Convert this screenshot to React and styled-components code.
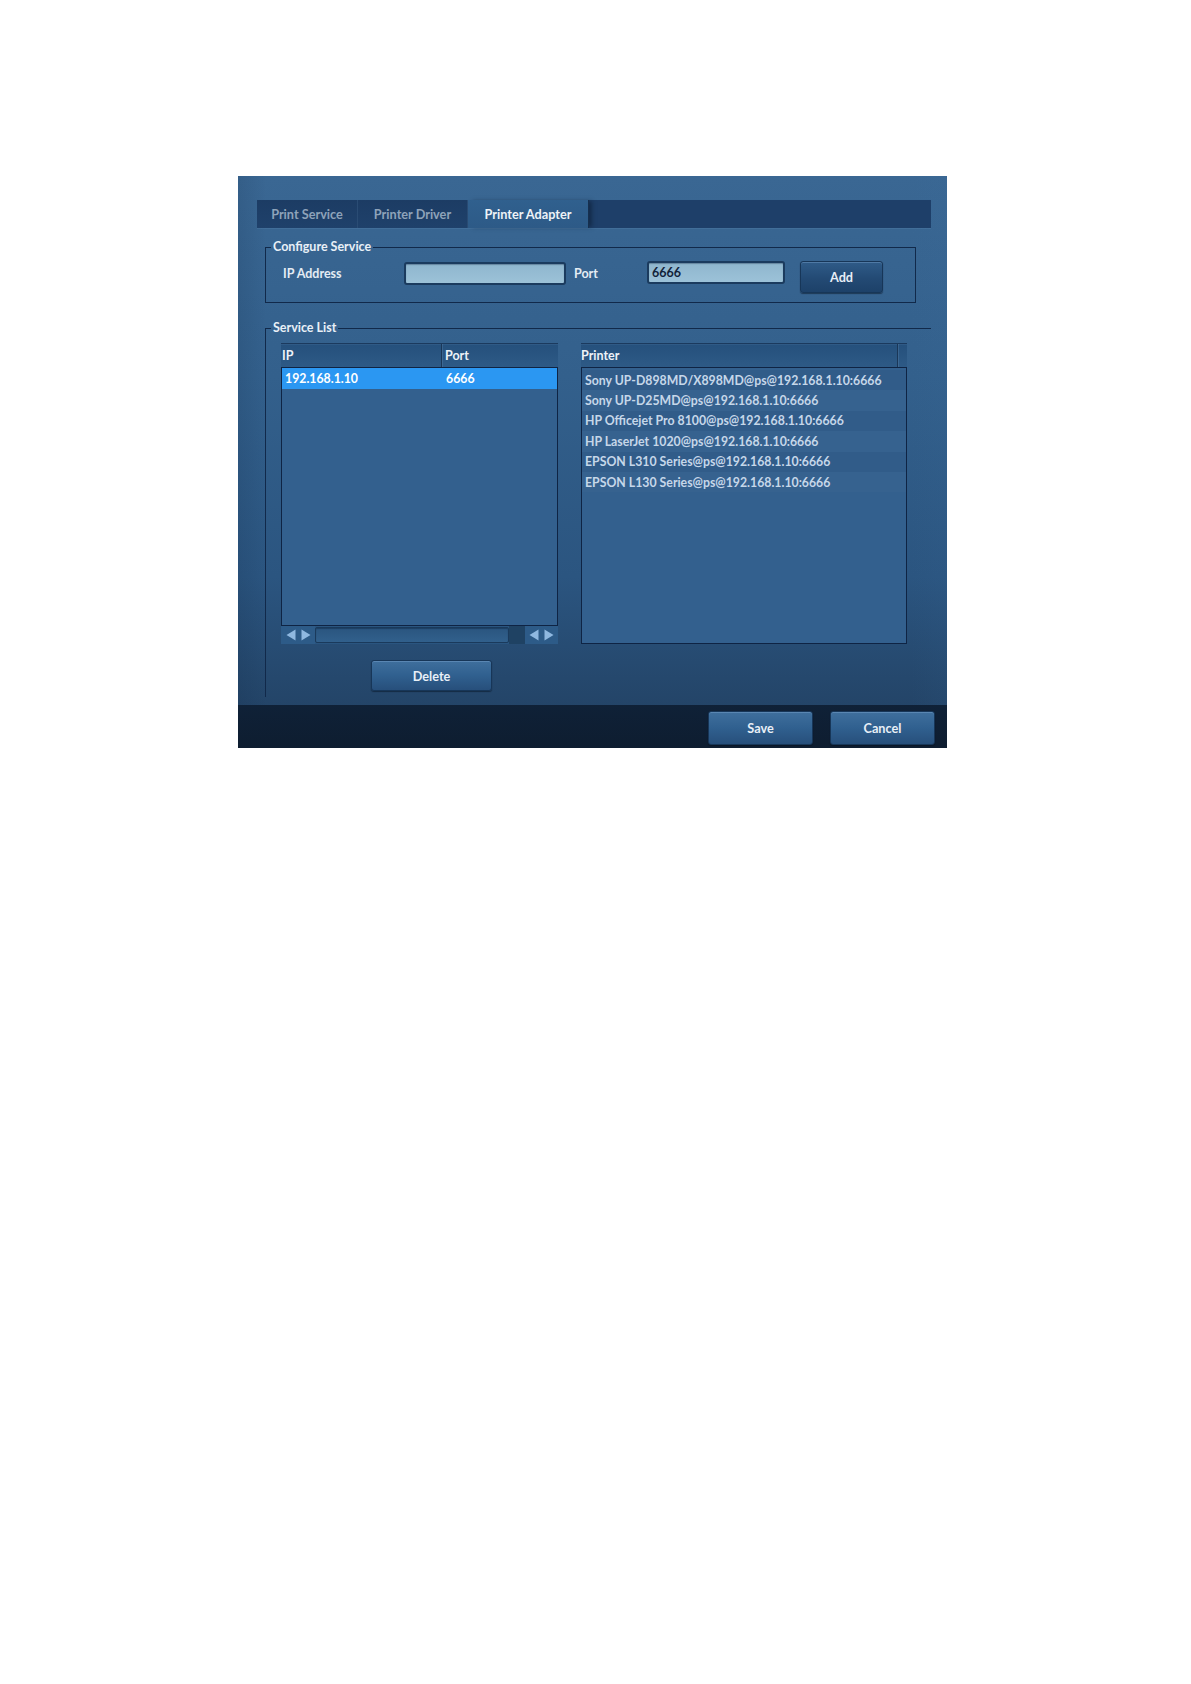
import React from "react";
import styled, { createGlobalStyle } from "styled-components";

const Global = createGlobalStyle`
  html, body { margin: 0; padding: 0; background: #ffffff; }
  body { font-family: "Lato", "Open Sans", sans-serif; }
  * { box-sizing: border-box; }
`;

const Page = styled.div`
  padding: 176px 0 0 238px;
  min-height: 1684px;
`;

const Dialog = styled.div`
  width: 709px;
  height: 572px;
  display: flex;
  flex-direction: column;
  background:
    linear-gradient(90deg, rgba(10, 30, 55, 0.12) 0%, rgba(0, 0, 0, 0) 4%, rgba(0, 0, 0, 0) 95%, rgba(60, 110, 160, 0.08) 100%),
    linear-gradient(180deg, #3a6793 0%, #33608c 35%, #2b5580 70%, #213f60 100%);
  font-weight: 700;
  font-size: 12.5px;
  color: #e6eef6;
`;

const Body = styled.div`
  flex: 1;
  display: flex;
  flex-direction: column;
  padding: 24px 16px 8px 19px;
`;

const TabBar = styled.div`
  height: 28px;
  display: flex;
  background: #1e3f69;
  box-shadow: 0 1px 0 rgba(120, 160, 200, 0.15);
`;

const Tab = styled.div`
  width: ${(p) => p.$w}px;
  display: flex;
  align-items: center;
  justify-content: center;
  font-size: 12.7px;
  color: ${(p) => (p.$active ? "#eef3f8" : "#8ea3ba")};
  background: ${(p) =>
    p.$active
      ? "linear-gradient(180deg, #30608e 0%, #2d5a87 100%)"
      : "linear-gradient(180deg, #1c3c64 0%, #1f416b 100%)"};
  border-right: 1px solid ${(p) => (p.$active ? "#16304f" : "#2a4c74")};
  box-shadow: ${(p) => (p.$active ? "4px 0 4px -1px rgba(10, 25, 45, 0.5)" : "none")};
`;

const Fieldset = styled.fieldset`
  margin: ${(p) => p.$mt}px 0 0 8px;
  padding: 0;
  border: 1px solid #11294a;
  ${(p) =>
    p.$open &&
    `
    border-right: none;
    border-bottom: none;
  `}
  min-inline-size: 0;
`;

const Legend = styled.legend`
  margin-left: 5px;
  padding: 0 2px;
  font-size: 12.5px;
  line-height: 16px;
  color: #e9f0f7;
`;

const ConfigRow = styled.div`
  height: 47px;
  display: flex;
  align-items: flex-start;
  padding: 6px 0 0 17px;
`;

const Label = styled.div`
  width: ${(p) => p.$w}px;
  height: 22px;
  display: flex;
  align-items: center;
  font-size: 12.5px;
  color: #e4ecf4;
  margin-top: 1px;
  padding-left: ${(p) => p.$pl || 0}px;
`;

const Input = styled.div`
  width: ${(p) => p.$w}px;
  height: 23px;
  margin-top: ${(p) => p.$mt || 0}px;
  border: 2px solid #1b3b5e;
  border-radius: 3px;
  background: linear-gradient(180deg, #8fb6ce 0%, #9cc2d8 100%);
  box-shadow: inset 0 1px 1px rgba(20, 40, 70, 0.35);
  display: flex;
  align-items: center;
  padding-left: 3px;
  font-size: 12.5px;
  color: #12233a;
`;

const Button = styled.button`
  width: ${(p) => p.$w}px;
  height: ${(p) => p.$h}px;
  margin-left: ${(p) => p.$ml || 0}px;
  border: 1px solid #173658;
  border-radius: 3px;
  background: ${(p) =>
    p.$dark
      ? "linear-gradient(180deg, #2f5b88 0%, #234a74 55%, #1d4169 100%)"
      : "linear-gradient(180deg, #3f6f9d 0%, #30608f 50%, #274f7b 100%)"};
  box-shadow: inset 0 1px 0 rgba(140, 180, 220, 0.35), 0 1px 1px rgba(5, 15, 30, 0.5);
  color: #e8eff7;
  font-family: "Lato", "Open Sans", sans-serif;
  font-weight: 700;
  font-size: 12.7px;
  display: flex;
  align-items: center;
  justify-content: center;
  padding: 0;
  cursor: pointer;
`;

const ServiceInner = styled.div`
  padding: 7px 0 0 15px;
  display: flex;
  flex-direction: column;
  height: 361px;
`;

const Lists = styled.div`
  display: flex;
  gap: 23px;
  align-items: flex-start;
`;

const ListBox = styled.div`
  width: ${(p) => p.$w}px;
  display: flex;
  flex-direction: column;
`;

const Header = styled.div`
  height: 24px;
  display: grid;
  grid-template-columns: ${(p) => p.$cols};
  border-top: 1px solid #1b3a5e;
  background: linear-gradient(180deg, #25507c 0%, #2a5682 60%, #2e5a86 100%);
  box-shadow: inset 0 1px 0 rgba(90, 130, 170, 0.2);
`;

const HeadCell = styled.div`
  display: flex;
  align-items: center;
  padding-left: ${(p) => p.$pl ?? 1}px;
  font-size: 12.5px;
  color: #edf2f8;
  border-right: ${(p) => (p.$sep ? "1px solid #1a3758" : "none")};
  box-shadow: ${(p) => (p.$sep ? "1px 0 0 rgba(110, 150, 190, 0.25)" : "none")};
`;

const ListBody = styled.div`
  height: ${(p) => p.$h}px;
  border: 1px solid #0f2444;
  background: #33608e;
  padding-top: ${(p) => p.$pt || 0}px;
  display: flex;
  flex-direction: column;
`;

const Row = styled.div`
  height: 21px;
  display: grid;
  grid-template-columns: ${(p) => p.$cols || "1fr"};
  align-items: center;
  background: ${(p) => (p.$sel ? "#2b97f2" : "transparent")};
  color: ${(p) => (p.$sel ? "#ffffff" : "#c9d9ea")};
  font-size: 12.3px;
  padding-left: ${(p) => p.$pl}px;
  white-space: nowrap;
`;

const PrinterRow = styled.div`
  height: 20.4px;
  flex: none;
  display: flex;
  align-items: center;
  padding-left: 3px;
  font-size: 12.3px;
  color: #c6d7e9;
  white-space: nowrap;
  background: ${(p) => (p.$alt ? "rgba(255,255,255,0.015)" : "rgba(0,0,0,0.035)")};
`;

const ScrollBar = styled.div`
  height: 18px;
  display: flex;
  background: #2a5580;
`;

const ArrowPair = styled.div`
  width: ${(p) => p.$w}px;
  display: flex;
  align-items: center;
  justify-content: center;
  gap: 5px;
  background: #2d5b88;
`;

const Track = styled.div`
  flex: 1;
  margin: 1px 0;
  border: 1px solid #1a3a5c;
  border-radius: 2px;
  background: linear-gradient(180deg, #2a557f 0%, #31608c 100%);
  box-shadow: inset 0 1px 1px rgba(10, 30, 55, 0.4);
`;

const TrackEnd = styled.div`
  width: 16px;
  background: #1f4263;
`;

const DeleteRow = styled.div`
  padding: 16px 0 0 90px;
`;

const Footer = styled.div`
  height: 44px;
  display: flex;
  justify-content: flex-end;
  align-items: flex-start;
  padding: 6px 12px 0 0;
  gap: 17px;
  background: linear-gradient(180deg, #0f2137 0%, #0e1d30 100%);
`;

const Arrow = ({ dir }) => (
  <svg width="10" height="12" viewBox="0 0 10 12">
    {dir === "left" ? (
      <polygon points="9.5,0.5 9.5,11.5 0.5,6" fill="#8fb8e0" />
    ) : (
      <polygon points="0.5,0.5 0.5,11.5 9.5,6" fill="#8fb8e0" />
    )}
  </svg>
);

const printers = [
  "Sony UP-D898MD/X898MD@ps@192.168.1.10:6666",
  "Sony UP-D25MD@ps@192.168.1.10:6666",
  "HP Officejet Pro 8100@ps@192.168.1.10:6666",
  "HP LaserJet 1020@ps@192.168.1.10:6666",
  "EPSON L310 Series@ps@192.168.1.10:6666",
  "EPSON L130 Series@ps@192.168.1.10:6666",
];

export default function App() {
  return (
    <>
      <Global />
      <Page>
        <Dialog>
          <Body>
            <TabBar>
              <Tab $w={101}>Print Service</Tab>
              <Tab $w={110}>Printer Driver</Tab>
              <Tab $w={121} $active>
                Printer Adapter
              </Tab>
            </TabBar>

            <Fieldset $mt={11} style={{ width: 651 }}>
              <Legend>Configure Service</Legend>
              <ConfigRow>
                <Label $w={121}>IP Address</Label>
                <Input $w={162} $mt={1} />
                <Label $w={81} $pl={8}>
                  Port
                </Label>
                <Input $w={138}>6666</Input>
                <Button $w={83} $h={32} $ml={15} $dark>
                  Add
                </Button>
              </ConfigRow>
            </Fieldset>

            <Fieldset $mt={17} $open>
              <Legend>Service List</Legend>
              <ServiceInner>
                <Lists>
                  <ListBox $w={277}>
                    <Header $cols="161px 1fr">
                      <HeadCell $sep>IP</HeadCell>
                      <HeadCell $pl={3}>Port</HeadCell>
                    </Header>
                    <ListBody $h={259}>
                      <Row $sel $cols="161px 1fr" $pl={3}>
                        <span>192.168.1.10</span>
                        <span>6666</span>
                      </Row>
                    </ListBody>
                    <ScrollBar>
                      <ArrowPair $w={34}>
                        <Arrow dir="left" />
                        <Arrow dir="right" />
                      </ArrowPair>
                      <Track />
                      <TrackEnd />
                      <ArrowPair $w={33}>
                        <Arrow dir="left" />
                        <Arrow dir="right" />
                      </ArrowPair>
                    </ScrollBar>
                  </ListBox>

                  <ListBox $w={326}>
                    <Header $cols="1fr 9px">
                      <HeadCell $sep $pl={0}>
                        Printer
                      </HeadCell>
                      <HeadCell />
                    </Header>
                    <ListBody $h={277} $pt={2}>
                      {printers.map((p, i) => (
                        <PrinterRow key={p} $alt={i % 2 === 1}>
                          {p}
                        </PrinterRow>
                      ))}
                    </ListBody>
                  </ListBox>
                </Lists>
                <DeleteRow>
                  <Button $w={121} $h={31}>
                    Delete
                  </Button>
                </DeleteRow>
              </ServiceInner>
            </Fieldset>
          </Body>
          <Footer>
            <Button $w={105} $h={34}>
              Save
            </Button>
            <Button $w={105} $h={34}>
              Cancel
            </Button>
          </Footer>
        </Dialog>
      </Page>
    </>
  );
}
